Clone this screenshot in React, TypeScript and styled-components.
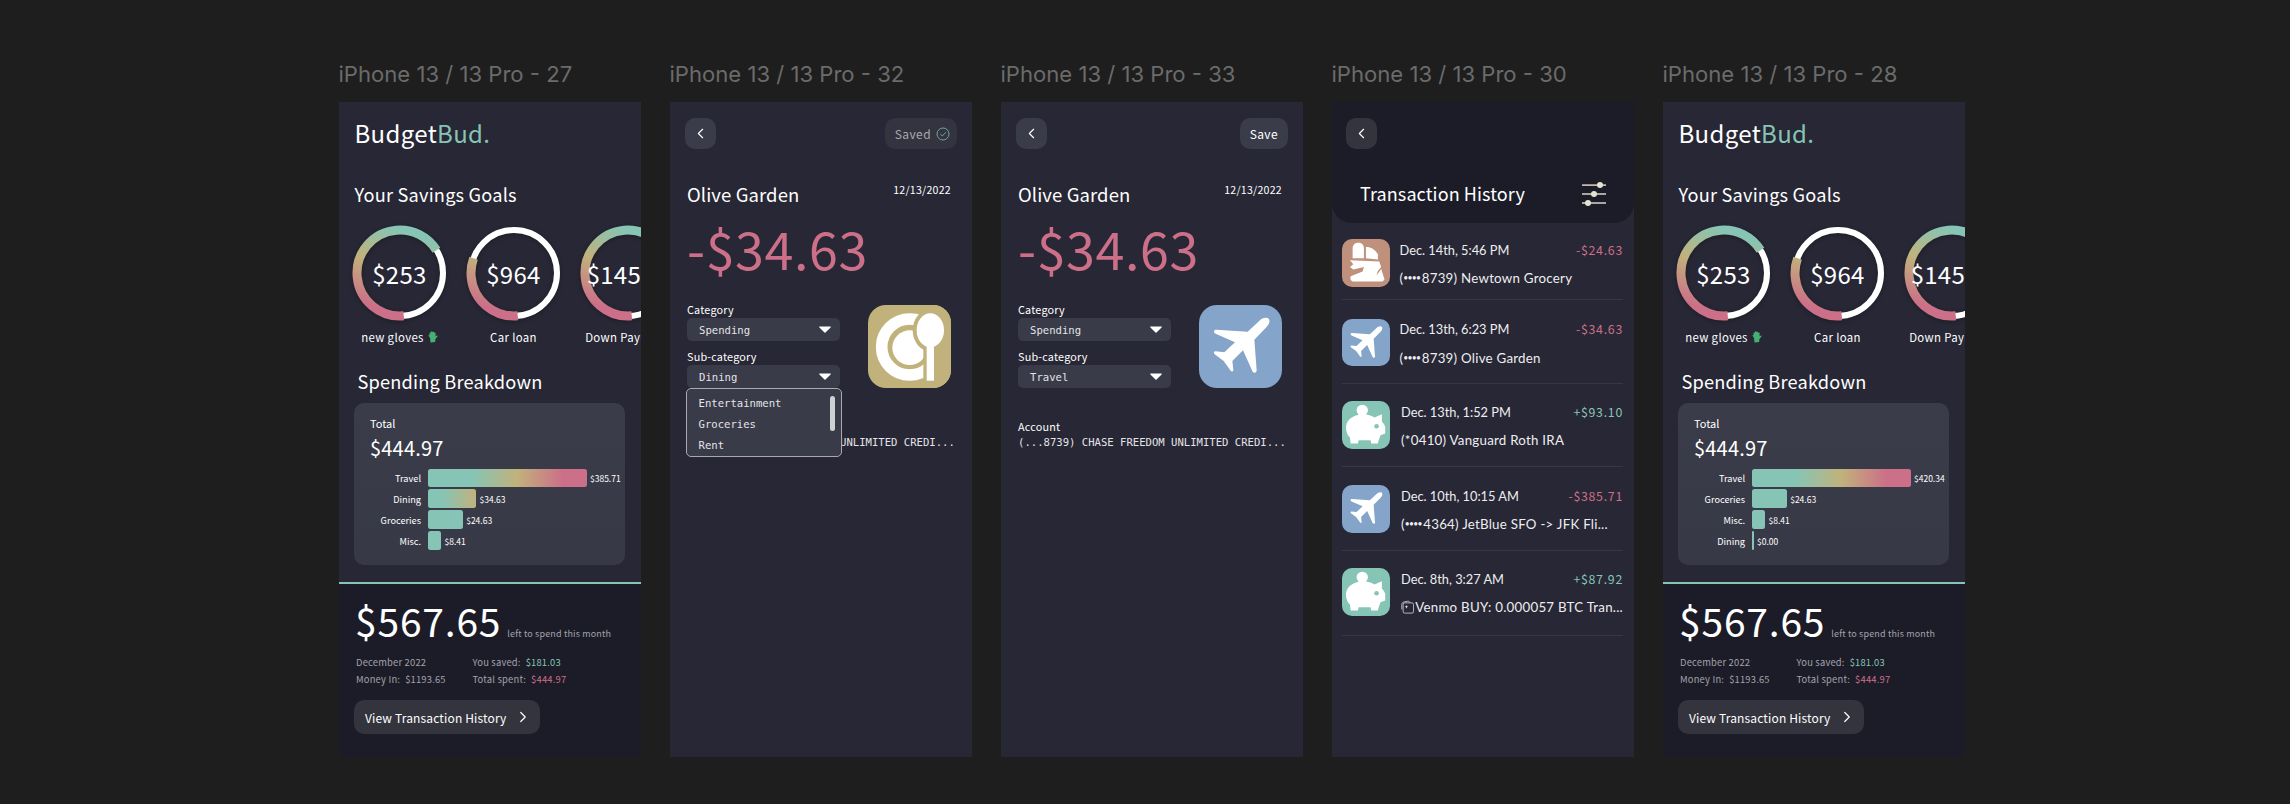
import React from "react";
import styled, { createGlobalStyle } from "styled-components";
import { ChevronLeft, ChevronRight } from "lucide-react";

const UI = `"Noto Sans CJK KR", "Noto Sans", sans-serif`;
const MONO = `"DejaVu Sans Mono", "Liberation Mono", monospace`;
const ROUND = `Lato, "Open Sans", sans-serif`;
const TEAL = "#86c5b5";
const GOLD = "#c1b27c";
const PINK = "#cc6f88";
const BLUE = "#84a4c9";
const TAN = "#bf917c";

const Global = createGlobalStyle`
  html, body { margin: 0; padding: 0; background: #1e1e1e; }
  body { width: 2290px; height: 804px; overflow: hidden; font-family: ${UI}; }
  * { box-sizing: border-box; }
`;

const Canvas = styled.div`
  display: flex;
  gap: 28.5px;
  padding: 60px 0 0 338.5px;
  width: 2290px;
  height: 804px;
`;
const Column = styled.section`
  width: 302.5px;
  flex: none;
`;
const FrameLabel = styled.div`
  font-family: Inter, sans-serif;
  font-size: 22.1px;
  line-height: 28px;
  height: 42px;
  color: #6b6b6b;
  white-space: nowrap;
`;
const Frame = styled.div`
  position: relative;
  width: 302.5px;
  height: 655px;
  background: #272735;
  color: #fff;
  overflow: hidden;
  display: flex;
  flex-direction: column;
`;

/* Home */
const Logo = styled.div`
  margin: 15px 0 0 16px;
  font-size: 24px;
  line-height: 32px;
  letter-spacing: 0.35px;
  span { color: ${TEAL}; }
`;
const SectionTitle = styled.h2<{ $left: number; $top: number }>`
  margin: ${(p) => p.$top}px 0 0 ${(p) => p.$left}px;
  font-size: 18.2px;
  line-height: 24px;
  font-weight: 400;
  letter-spacing: 0.2px;
  white-space: nowrap;
`;
const Rings = styled.div`
  display: flex;
  gap: 19px;
  margin: 19px 0 0 13.5px;
`;
const Goal = styled.div`
  width: 95px;
  flex: none;
  display: flex;
  flex-direction: column;
  align-items: center;
`;
const RingBox = styled.div`
  position: relative;
  width: 96px;
  height: 96px;
  svg { display: block; filter: drop-shadow(0 1px 2px rgba(0, 0, 0, 0.25)); }
`;
const RingValue = styled.div`
  position: absolute;
  inset: 0;
  display: flex;
  align-items: center;
  justify-content: center;
  font-size: 24px;
  letter-spacing: 0.3px;
`;
const GoalLabel = styled.div`
  margin-top: 8px;
  font-size: 11.4px;
  line-height: 16px;
  letter-spacing: 0.35px;
  white-space: nowrap;
  display: flex;
  align-items: center;
  gap: 4px;
`;
const Panel = styled.div`
  margin: 10px 0 0 15.5px;
  width: 271px;
  height: 162px;
  border-radius: 10px;
  background: linear-gradient(180deg, #3a3c4a, #383946);
  padding: 13px 16px 0;
`;
const TotalLabel = styled.div`
  font-size: 11px;
  line-height: 15px;
`;
const TotalValue = styled.div`
  font-size: 20px;
  line-height: 26px;
  margin-top: 4px;
  letter-spacing: 0.2px;
`;
const Bars = styled.div`
  margin: 7.5px 0 0 0;
  display: flex;
  flex-direction: column;
  gap: 2.3px;
`;
const BarRow = styled.div`
  display: flex;
  align-items: center;
  height: 18.7px;
`;
const BarName = styled.div`
  width: 51px;
  margin-right: 7px;
  text-align: right;
  font-size: 9.2px;
  white-space: nowrap;
  flex: none;
`;
const Bar = styled.div<{ $fill: string }>`
  height: 18.7px;
  border-radius: 2.5px;
  background: ${(p) => p.$fill};
  flex: none;
`;
const BarValue = styled.div`
  margin-left: 3.5px;
  font-size: 8.5px;
  white-space: nowrap;
`;
const Footer = styled.div`
  margin-top: 16.5px;
  flex: 1;
  background: #1c1c28;
  border-top: 2.5px solid ${TEAL};
  padding: 0 0 0 15.5px;
`;
const LeftRow = styled.div`
  display: flex;
  align-items: baseline;
  margin: 9.5px 0 0 1px;
  height: 54px;
`;
const LeftAmount = styled.div`
  font-size: 39px;
  line-height: 54px;
  letter-spacing: 0.8px;
`;
const LeftNote = styled.div`
  margin-left: 6px;
  font-size: 9px;
  color: #a3a3aa;
  letter-spacing: 0.15px;
  white-space: nowrap;
`;
const Stats = styled.div`
  display: grid;
  grid-template-columns: 116.5px 1fr;
  row-gap: 3px;
  margin: 7.5px 0 0 2px;
  font-size: 9.4px;
  line-height: 14px;
  color: #a3a3aa;
  letter-spacing: 0.2px;
`;
const Stat = styled.div`
  white-space: nowrap;
`;
const StatValue = styled.span<{ $color?: string }>`
  margin-left: 5px;
  color: ${(p) => p.$color || "inherit"};
`;
const HistoryButton = styled.div`
  margin-top: 14.5px;
  width: 186px;
  height: 34px;
  border-radius: 10px;
  background: #33343e;
  display: flex;
  align-items: center;
  padding-left: 11px;
  gap: 7px;
  font-size: 12px;
  letter-spacing: 0.15px;
  white-space: nowrap;
`;

/* Detail */
const TopBar = styled.div`
  display: flex;
  justify-content: space-between;
  padding: 16px 15px 0;
`;
const IconButton = styled.div<{ $bg?: string }>`
  width: 31px;
  height: 31px;
  border-radius: 10px;
  background: ${(p) => p.$bg || "#3b3c4a"};
  display: flex;
  align-items: center;
  justify-content: center;
`;
const ActionButton = styled.div<{ $saved?: boolean }>`
  height: 31px;
  padding: ${(p) => (p.$saved ? "0 7px 0 10px" : "0 10px")};
  border-radius: 10px;
  background: ${(p) => (p.$saved ? "#33343f" : "#3b3c4a")};
  color: ${(p) => (p.$saved ? "#a9a9b0" : "#fff")};
  display: flex;
  align-items: center;
  gap: 5px;
  font-size: 12px;
  letter-spacing: 0.4px;
`;
const TitleRow = styled.div`
  display: flex;
  justify-content: space-between;
  padding: 32px 21px 0 17.5px;
`;
const Merchant = styled.div`
  font-size: 18.5px;
  line-height: 26px;
  letter-spacing: 0.1px;
  white-space: nowrap;
`;
const DateText = styled.div`
  font-size: 10.6px;
  line-height: 18px;
  letter-spacing: 0.25px;
`;
const BigAmount = styled.div`
  margin: 10px 0 0 17.5px;
  font-size: 52px;
  line-height: 62px;
  color: ${PINK};
  letter-spacing: 0.6px;
  white-space: nowrap;
`;
const FormRow = styled.div`
  display: flex;
  justify-content: space-between;
  align-items: flex-end;
  padding: 23px 21px 0 17.5px;
`;
const Fields = styled.div`
  width: 153px;
`;
const FieldLabel = styled.div<{ $top?: number }>`
  margin-top: ${(p) => p.$top || 0}px;
  font-size: 10.8px;
  line-height: 14px;
  letter-spacing: 0.2px;
`;
const SelectWrap = styled.div`
  position: relative;
  margin-top: 2px;
`;
const SelectBox = styled.div`
  height: 23px;
  border-radius: 5px;
  background: #3a3b49;
  display: flex;
  align-items: center;
  justify-content: space-between;
  padding: 0 9px 0 12px;
  font-family: ${MONO};
  font-size: 10.6px;
  color: #e4e4e8;
`;
const Menu = styled.div`
  position: absolute;
  z-index: 2;
  top: 23px;
  left: -1px;
  width: 156px;
  height: 68.5px;
  border: 1px solid #a9a9b0;
  border-radius: 5px;
  background: #3a3b49;
  padding: 4px 0 0 11.5px;
  font-family: ${MONO};
  font-size: 10.6px;
  line-height: 21px;
  color: #e4e4e8;
`;
const ScrollThumb = styled.div`
  position: absolute;
  top: 7px;
  right: 6.5px;
  width: 4.5px;
  height: 35px;
  border-radius: 3px;
  background: #d0d0d0;
`;
const Tile = styled.div<{ $bg: string; $size: number; $radius: number }>`
  width: ${(p) => p.$size}px;
  height: ${(p) => p.$size}px;
  border-radius: ${(p) => p.$radius}px;
  background: ${(p) => p.$bg};
  flex: none;
  overflow: hidden;
  svg { display: block; width: 100%; height: 100%; }
`;
const AccountBlock = styled.div`
  padding: 31px 0 0 17.5px;
`;
const AccountText = styled.div`
  margin-top: 2px;
  font-family: ${MONO};
  font-size: 10.6px;
  line-height: 14px;
  color: #e4e4e8;
  white-space: nowrap;
`;

/* Transactions */
const HistoryHeader = styled.div`
  height: 120.7px;
  flex: none;
  background: #1c1c28;
  border-radius: 0 0 20px 20px;
  padding: 16px 28px 0 14.5px;
`;
const HeaderRow = styled.div`
  display: flex;
  align-items: center;
  justify-content: space-between;
  margin: 32px 0 0 14px;
`;
const HeaderTitle = styled.div`
  font-size: 18px;
  line-height: 25px;
  letter-spacing: 0.1px;
`;
const TxRow = styled.div<{ $pad: number; $height: number; $gap: number }>`
  display: flex;
  gap: ${(p) => p.$gap}px;
  height: ${(p) => p.$height}px;
  margin: 0 11px 0 10.5px;
  padding-top: ${(p) => p.$pad}px;
  border-bottom: 1px solid #373846;
`;
const TxBody = styled.div`
  flex: 1;
  min-width: 0;
  font-family: ${ROUND};
`;
const TxTop = styled.div`
  display: flex;
  justify-content: space-between;
  align-items: center;
  height: 21px;
`;
const TxDate = styled.div`
  font-size: 12.8px;
  color: #eeeef0;
  white-space: nowrap;
`;
const TxAmount = styled.div<{ $color: string }>`
  font-family: ${UI};
  font-size: 12.4px;
  letter-spacing: 0.7px;
  color: ${(p) => p.$color};
`;
const TxName = styled.div`
  margin-top: 8px;
  display: flex;
  align-items: center;
  height: 20px;
  font-size: 13.3px;
  letter-spacing: 0.25px;
  color: #eeeef0;
  white-space: nowrap;
`;
const Dots = styled.span`
  font-size: 8.5px;
  letter-spacing: -0.7px;
  margin-right: 1.5px;
`;

/* Drawings */
const Ring = ({ id, sweep }: { id: string; sweep: number }) => (
  <svg width="96" height="96" viewBox="0 0 96 96">
    <defs>
      <linearGradient
        id={id}
        gradientUnits="userSpaceOnUse"
        x1="72"
        y1="4"
        x2="44"
        y2="94"
        gradientTransform="rotate(-85 48 48)"
      >
        <stop offset="0.08" stopColor={TEAL} />
        <stop offset="0.48" stopColor={GOLD} />
        <stop offset="0.95" stopColor={PINK} />
      </linearGradient>
    </defs>
    <circle cx="48" cy="48" r="43" fill="none" stroke="#fff" strokeWidth="6" />
    <circle
      cx="48"
      cy="48"
      r="43"
      fill="none"
      stroke={`url(#${id})`}
      strokeWidth="9"
      pathLength={360}
      strokeDasharray={`${sweep} 360`}
      transform="rotate(85 48 48)"
    />
  </svg>
);

const Glove = () => (
  <svg width="10" height="12" viewBox="0 0 10 12">
    <path
      d="M2.5 11.5 L2 7 L.6 4.8 C.3 4 1 3.6 1.5 4.2 L1.6 1.8 C1.7 1 2.6 1 2.8 1.8 L3.2 .8 C3.4 .1 4.4 .2 4.5 1 L5.2 .8 C5.8 .7 6.2 1.1 6.1 1.8 L7 1.6 C7.6 1.6 7.8 2.2 7.6 2.8 L7.6 5.2 L9 4.6 C9.7 4.6 9.8 5.3 9.3 5.8 L7.4 8 L7.2 11 Z"
      fill="#45b071"
    />
  </svg>
);

const Spoon = () => (
  <svg viewBox="0 0 249 249">
    <circle cx="125" cy="126" r="84" fill="none" stroke="#fff" strokeWidth="35" />
    <circle cx="125" cy="128" r="52" fill="#fff" />
    <rect x="166" y="0" width="83" height="249" fill={GOLD} />
    <ellipse cx="187" cy="76" rx="53" ry="63" fill={GOLD} />
    <ellipse cx="187" cy="76" rx="41" ry="51" fill="#fff" />
    <rect x="176" y="110" width="22" height="117" fill="#fff" />
  </svg>
);

const Plane = () => (
  <svg viewBox="0 0 249 249">
    <path
      d="M187 42 C202 35 214 38 211 52 C209 60 203 66 197 72 L166 104 L173 196 C173 205 163 206 160 198 L132 136 L100 168 L103 194 C103 200 98 201 95 197 L74 168 L47 148 C43 144 44 139 50 139 L76 142 L108 112 L50 86 C42 82 44 74 52 74 L146 80 Z"
      fill="#fff"
    />
  </svg>
);

const Piggy = () => (
  <svg viewBox="0 0 143 143">
    <circle cx="61" cy="28" r="17" fill="#fff" />
    <path
      d="M38 45 C60 36 84 40 98 50 L120 40 L120 62 C126 68 128 72 130 78 L130 98 L116 103 L110 120 L108 128 L88 128 L86 118 L50 118 L48 128 L26 128 L24 110 C16 104 12 92 12 80 C12 64 22 52 38 45 Z"
      fill="#fff"
    />
    <circle cx="104" cy="76" r="7" fill={TEAL} />
  </svg>
);

const Bag = () => (
  <svg viewBox="0 0 143 143">
    <path d="M32 58 L32 28 C32 6 66 6 66 28 L66 58 Z" fill="#fff" />
    <path d="M72 24 C88 24 100 32 108 46 L108 62 L72 58 Z" fill="#fff" />
    <path
      d="M24 64 L112 68 L118 84 L108 96 L104 110 L118 90 L128 122 L122 128 L36 128 C26 128 24 120 26 112 L62 98 L66 84 L34 92 L24 84 L34 76 Z"
      fill="#fff"
    />
  </svg>
);

const Sliders = () => (
  <svg width="24" height="24" viewBox="0 0 24 24" fill="#e6e3d0">
    <rect x="0" y="2.4" width="24" height="1.4" />
    <rect x="0" y="11.3" width="24" height="1.4" />
    <rect x="0" y="20.3" width="24" height="1.4" />
    <circle cx="18" cy="3" r="3" />
    <circle cx="12" cy="12" r="3" />
    <circle cx="6" cy="21" r="3" />
  </svg>
);

const Check = () => (
  <svg width="14" height="14" viewBox="0 0 14 14" fill="none" stroke="#6fa69a" strokeWidth="1">
    <circle cx="7" cy="7" r="6" />
    <path d="M4.4 7.2 L6.3 9 L9.8 5.3" />
  </svg>
);

const Caret = () => (
  <svg width="12" height="7" viewBox="0 0 12 7">
    <path d="M.8 .5 H11.2 C11.8 .5 12 1 11.6 1.4 L6.5 6.4 C6.2 6.7 5.8 6.7 5.5 6.4 L.4 1.4 C0 1 .2 .5 .8 .5 Z" fill="#fff" />
  </svg>
);

const Sparkle = () => (
  <svg width="16" height="16" viewBox="0 0 16 16" fill="none" stroke="#e4e4e8" strokeWidth="0.9" style={{ marginRight: 1 }}>
    <path d="M1 11 V5 C1 3 2 2.4 3.4 2 L8 1 C9.5 .8 10.4 1.4 10.8 2.6" />
    <rect x="2.6" y="3" width="12.6" height="12.4" rx="1.8" />
    <path d="M6.6 5.6 L7.2 7.2 L8.8 7.8 L7.2 8.4 L6.6 10 L6 8.4 L4.4 7.8 L6 7.2 Z" fill="#e4e4e8" stroke="none" />
  </svg>
);

const Back = ({ bg }: { bg?: string }) => (
  <IconButton $bg={bg}>
    <ChevronLeft size={17} color="#fff" strokeWidth={1.6} />
  </IconButton>
);

/* Screens */
type BarData = { name: string; width: number; value: string; fill: string };
const FULL = `linear-gradient(90deg, ${TEAL} 28%, ${GOLD} 56%, ${PINK} 85%)`;
const PART = `linear-gradient(90deg, ${TEAL} 30%, ${GOLD} 100%)`;

const Home = ({ id, bars }: { id: string; bars: BarData[] }) => (
  <>
    <Logo>
      Budget<span>Bud.</span>
    </Logo>
    <SectionTitle $left={16} $top={33}>Your Savings Goals</SectionTitle>
    <Rings>
      {[
        { v: "$253", l: "new gloves", s: 243, g: true },
        { v: "$964", l: "Car loan", s: 115, g: false },
        { v: "$14500", l: "Down Payment", s: 235, g: false },
      ].map((r, i) => (
        <Goal key={r.l}>
          <RingBox>
            <Ring id={`${id}-ring-${i}`} sweep={r.s} />
            <RingValue>{r.v}</RingValue>
          </RingBox>
          <GoalLabel>
            {r.l}
            {r.g && <Glove />}
          </GoalLabel>
        </Goal>
      ))}
    </Rings>
    <SectionTitle $left={19} $top={24}>Spending Breakdown</SectionTitle>
    <Panel>
      <TotalLabel>Total</TotalLabel>
      <TotalValue>$444.97</TotalValue>
      <Bars>
        {bars.map((b) => (
          <BarRow key={b.name}>
            <BarName>{b.name}</BarName>
            <Bar $fill={b.fill} style={{ width: b.width }} />
            <BarValue>{b.value}</BarValue>
          </BarRow>
        ))}
      </Bars>
    </Panel>
    <Footer>
      <LeftRow>
        <LeftAmount>$567.65</LeftAmount>
        <LeftNote>left to spend this month</LeftNote>
      </LeftRow>
      <Stats>
        <Stat>December 2022</Stat>
        <Stat>You saved:<StatValue $color={TEAL}>$181.03</StatValue></Stat>
        <Stat>Money In:<StatValue>$1193.65</StatValue></Stat>
        <Stat>Total spent:<StatValue $color={PINK}>$444.97</StatValue></Stat>
      </Stats>
      <HistoryButton>
        View Transaction History
        <ChevronRight size={18} color="#fff" strokeWidth={1.6} />
      </HistoryButton>
    </Footer>
  </>
);

const Detail = ({ saved, sub, open }: { saved: boolean; sub: string; open: boolean }) => (
  <>
    <TopBar>
      <Back />
      {saved ? (
        <ActionButton $saved>
          Saved <Check />
        </ActionButton>
      ) : (
        <ActionButton>Save</ActionButton>
      )}
    </TopBar>
    <TitleRow>
      <Merchant>Olive Garden</Merchant>
      <DateText>12/13/2022</DateText>
    </TitleRow>
    <BigAmount>-$34.63</BigAmount>
    <FormRow>
      <Fields>
        <FieldLabel>Category</FieldLabel>
        <SelectWrap>
          <SelectBox>
            Spending
            <Caret />
          </SelectBox>
        </SelectWrap>
        <FieldLabel $top={8}>Sub-category</FieldLabel>
        <SelectWrap>
          <SelectBox>
            {sub}
            <Caret />
          </SelectBox>
          {open && (
            <Menu>
              <div>Entertainment</div>
              <div>Groceries</div>
              <div>Rent</div>
              <ScrollThumb />
            </Menu>
          )}
        </SelectWrap>
      </Fields>
      <Tile $bg={open ? GOLD : BLUE} $size={83} $radius={18}>
        {open ? <Spoon /> : <Plane />}
      </Tile>
    </FormRow>
    <AccountBlock>
      <FieldLabel>Account</FieldLabel>
      <AccountText>(...8739) CHASE FREEDOM UNLIMITED CREDI...</AccountText>
    </AccountBlock>
  </>
);

const rows = [
  { pad: 16.6, h: 77, gap: 10, tile: TAN, art: <Bag />, date: "Dec. 14th, 5:46 PM", amt: "-$24.63", color: PINK, name: <><span>(</span><Dots>••••</Dots>8739) Newtown Grocery</> },
  { pad: 19, h: 84, gap: 10, tile: BLUE, art: <Plane />, date: "Dec. 13th, 6:23 PM", amt: "-$34.63", color: PINK, name: <><span>(</span><Dots>••••</Dots>8739) Olive Garden</> },
  { pad: 17.5, h: 83.5, gap: 11.5, tile: TEAL, art: <Piggy />, date: "Dec. 13th, 1:52 PM", amt: "+$93.10", color: TEAL, name: <>(*0410) Vanguard Roth IRA</> },
  { pad: 18, h: 83.5, gap: 11.5, tile: BLUE, art: <Plane />, date: "Dec. 10th, 10:15 AM", amt: "-$385.71", color: PINK, name: <><span>(</span><Dots>••••</Dots>4364) JetBlue SFO -&gt; JFK Fli...</> },
  { pad: 17.5, h: 85.5, gap: 11.5, tile: TEAL, art: <Piggy />, date: "Dec. 8th, 3:27 AM", amt: "+$87.92", color: TEAL, name: <><Sparkle />Venmo BUY: 0.000057 BTC Tran...</> },
];

const History = () => (
  <>
    <HistoryHeader>
      <Back bg="#33343e" />
      <HeaderRow>
        <HeaderTitle>Transaction History</HeaderTitle>
        <Sliders />
      </HeaderRow>
    </HistoryHeader>
    {rows.map((r) => (
      <TxRow key={r.date} $pad={r.pad} $height={r.h} $gap={r.gap}>
        <Tile $bg={r.tile} $size={47.5} $radius={10}>
          {r.art}
        </Tile>
        <TxBody>
          <TxTop>
            <TxDate>{r.date}</TxDate>
            <TxAmount $color={r.color}>{r.amt}</TxAmount>
          </TxTop>
          <TxName>{r.name}</TxName>
        </TxBody>
      </TxRow>
    ))}
  </>
);

const barsA: BarData[] = [
  { name: "Travel", width: 158.5, value: "$385.71", fill: FULL },
  { name: "Dining", width: 48, value: "$34.63", fill: PART },
  { name: "Groceries", width: 34.7, value: "$24.63", fill: TEAL },
  { name: "Misc.", width: 13, value: "$8.41", fill: TEAL },
];
const barsB: BarData[] = [
  { name: "Travel", width: 158.5, value: "$420.34", fill: FULL },
  { name: "Groceries", width: 34.7, value: "$24.63", fill: TEAL },
  { name: "Misc.", width: 13, value: "$8.41", fill: TEAL },
  { name: "Dining", width: 1.5, value: "$0.00", fill: TEAL },
];

export default function App() {
  return (
    <>
      <Global />
      <Canvas>
        <Column>
          <FrameLabel>iPhone 13 / 13 Pro - 27</FrameLabel>
          <Frame><Home id="a" bars={barsA} /></Frame>
        </Column>
        <Column>
          <FrameLabel>iPhone 13 / 13 Pro - 32</FrameLabel>
          <Frame><Detail saved sub="Dining" open /></Frame>
        </Column>
        <Column>
          <FrameLabel>iPhone 13 / 13 Pro - 33</FrameLabel>
          <Frame><Detail saved={false} sub="Travel" open={false} /></Frame>
        </Column>
        <Column>
          <FrameLabel>iPhone 13 / 13 Pro - 30</FrameLabel>
          <Frame><History /></Frame>
        </Column>
        <Column>
          <FrameLabel>iPhone 13 / 13 Pro - 28</FrameLabel>
          <Frame><Home id="b" bars={barsB} /></Frame>
        </Column>
      </Canvas>
    </>
  );
}
